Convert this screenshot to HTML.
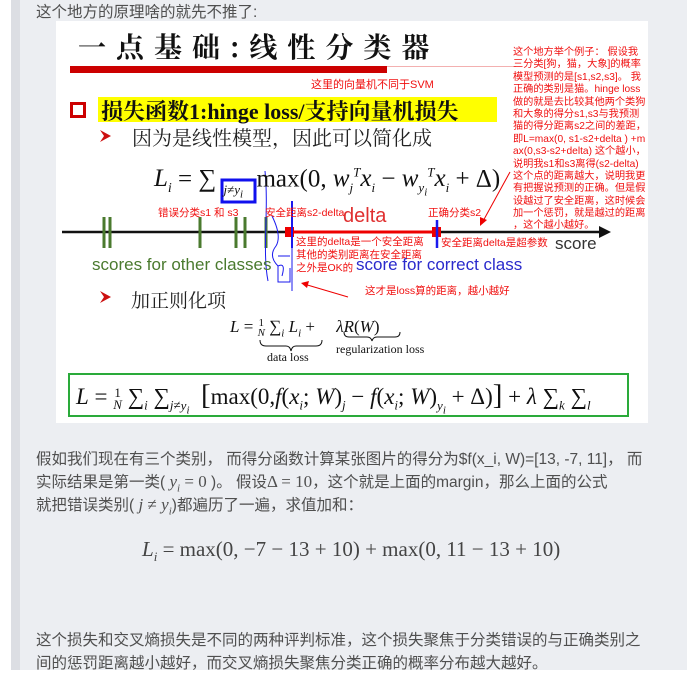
<!DOCTYPE html>
<html><head><meta charset="utf-8"><style>
*{margin:0;padding:0;box-sizing:border-box}
body{width:699px;height:670px;overflow:hidden;background:#fff;position:relative;font-family:"Liberation Sans","Noto Sans CJK SC",sans-serif}
.strip{position:absolute;left:11px;top:0;width:9px;height:670px;background:#dcdee3}
.panel{position:absolute;left:20px;top:0;width:667px;height:670px;background:#eceef2}
.a{position:absolute;white-space:nowrap}
.t{color:#4f4f4f;font-size:15.5px}
.img{position:absolute;left:56px;top:21px;width:592px;height:402px;background:#fff;overflow:hidden}
.r{color:#f01010;font-size:10.5px}
.ser{font-family:"Liberation Serif","Noto Serif CJK SC",serif}
.ann div{height:12.4px;line-height:12.4px}
</style></head><body>
<div class="strip"></div><div class="panel"></div>
<div class="a t" style="left:36px;top:0px">这个地方的原理啥的就先不推了:</div>

<div class="img">
<svg width="594" height="402" style="position:absolute;left:0;top:0">
<rect x="14" y="45" width="317" height="7" fill="#cc0000"/>
<line x1="331" y1="45.5" x2="460" y2="45.5" stroke="#f3b0b0" stroke-width="1"/>
<rect x="15.5" y="82.5" width="13" height="13" fill="none" stroke="#c00" stroke-width="3"/>
<rect x="42" y="76" width="399" height="25" fill="#ffff00"/>
<polygon points="44,109 55,115 44,121 48,115" fill="#cc1010"/>
<polygon points="44,270 55,276 44,282 48,276" fill="#cc1010"/>
<rect x="166" y="159" width="33" height="22" fill="none" stroke="#1010ee" stroke-width="3"/>
<line x1="6" y1="211" x2="550" y2="211" stroke="#111" stroke-width="2.5"/>
<polygon points="555,211 543,205 543,217" fill="#111"/>
<g stroke="#4a7a2e" stroke-width="3">
<line x1="48" y1="196" x2="48" y2="227"/><line x1="54" y1="196" x2="54" y2="227"/>
<line x1="144" y1="196" x2="144" y2="227"/><line x1="180" y1="196" x2="180" y2="227"/>
<line x1="189" y1="196" x2="189" y2="227"/><line x1="210" y1="196" x2="210" y2="227"/>
</g>
<line x1="234" y1="211" x2="381" y2="211" stroke="#e00" stroke-width="3"/>
<rect x="229" y="206" width="9" height="10" fill="#e00"/>
<rect x="376" y="206" width="9" height="10" fill="#e00"/>
<line x1="236" y1="180" x2="236" y2="227" stroke="#1a1aee" stroke-width="2"/>
<line x1="381" y1="199" x2="381" y2="227" stroke="#1a1aee" stroke-width="2.5"/>
<path d="M209 150 C213 190,206 230,212 260 M216 195 q10 20 4 30 q-8 10 2 20 q8 -4 4 10 M222 235 h12 M222 245 v16 h12 v-14 M236 190 v80" fill="none" stroke="#1a1aee" stroke-width="1"/>
<line x1="454" y1="151" x2="426" y2="202" stroke="#e00" stroke-width="1"/>
<polygon points="424,205 424,196 431,199" fill="#e00"/>
<line x1="292" y1="276" x2="248" y2="263" stroke="#e00" stroke-width="1"/>
<polygon points="245,262 253,260 251,267" fill="#e00"/>
<path d="M204 319 q0 6 6 6 h20 q4 0 5 5 q1 -5 5 -5 h20 q6 0 6 -6" fill="none" stroke="#111" stroke-width="1"/>
<path d="M288 311 q0 5 5 5 h18 q4 0 5 4 q1 -4 5 -4 h18 q5 0 5 -5" fill="none" stroke="#111" stroke-width="1"/>
<rect x="13" y="353" width="559" height="42" fill="none" stroke="#2aaa3a" stroke-width="2"/>
</svg>
<div class="a" style="left:22px;top:5px;font-size:28px;font-weight:bold;letter-spacing:10px;color:#111;font-family:'Noto Serif CJK SC',serif">一点基础:线性分类器</div>
<div class="a r" style="left:255px;top:55px;font-size:11px">这里的向量机不同于SVM</div>
<div class="a" style="left:45px;top:74px;font-size:22px;font-weight:bold;color:#111;font-family:'Liberation Serif','Noto Serif CJK SC',serif">损失函数1:hinge loss/支持向量机损失</div>
<div class="a" style="left:76px;top:101px;font-size:20px;color:#222;font-family:'Noto Serif CJK SC',serif">因为是线性模型，因此可以简化成</div>
<div class="a ser" style="left:98px;top:144px;font-size:25px;color:#111"><i>L<sub style="font-size:14px">i</sub></i> = ∑<span style="display:inline-block;width:34px;font-size:13px;vertical-align:-8px;text-align:center"><i>j</i>≠<i>y<sub>i</sub></i></span> max(0, <i>w<sub style="font-size:13px">j</sub><sup style="font-size:13px">T</sup>x<sub style="font-size:13px">i</sub></i> − <i>w<sub style="font-size:13px">y<sub>i</sub></sub><sup style="font-size:13px">T</sup>x<sub style="font-size:13px">i</sub></i> + Δ)</div>
<div class="a r ann" style="left:457px;top:26px;font-size:10.2px">
<div>这个地方举个例子： 假设我</div><div>三分类[狗，猫，大象]的概率</div><div>模型预测的是[s1,s2,s3]。 我</div><div>正确的类别是猫。hinge loss</div><div>做的就是去比较其他两个类狗</div><div>和大象的得分s1,s3与我预测</div><div>猫的得分距离s2之间的差距，</div><div>即L=max(0, s1-s2+delta ) +m</div><div>ax(0,s3-s2+delta) 这个越小，</div><div>说明我s1和s3离得(s2-delta)</div><div>这个点的距离越大，说明我更</div><div>有把握说预测的正确。但是假</div><div>设越过了安全距离，这时候会</div><div>加一个惩罚，就是越过的距离</div><div>，这个越小越好。</div></div>
<div class="a r" style="left:102px;top:184px">错误分类s1 和 s3</div>
<div class="a r" style="left:209px;top:184px">安全距离s2-delta</div>
<div class="a" style="left:287px;top:184px;font-size:20px;color:#e03030">delta</div>
<div class="a r" style="left:372px;top:184px">正确分类s2</div>
<div class="a r" style="left:240px;top:215px;line-height:13px">这里的delta是一个安全距离<br>其他的类别距离在安全距离<br>之外是OK的</div>
<div class="a r" style="left:385px;top:214px">安全距离delta是超参数</div>
<div class="a" style="left:499px;top:213px;font-size:17px;color:#333">score</div>
<div class="a" style="left:36px;top:234px;font-size:17px;color:#4a7a2e">scores for other classes</div>
<div class="a" style="left:300px;top:234px;font-size:17px;color:#2a2acc">score for correct class</div>
<div class="a r" style="left:309px;top:262px">这才是loss算的距离，越小越好</div>
<div class="a" style="left:75px;top:265px;font-size:19px;color:#222;font-family:'Noto Serif CJK SC',serif">加正则化项</div>
<div class="a ser" style="left:174px;top:296px;font-size:17px;color:#111"><i>L</i> = <span style="display:inline-block;font-size:11px;vertical-align:middle;text-align:center;line-height:10px">1<br><i>N</i></span> ∑<sub style="font-size:11px"><i>i</i></sub> <i>L<sub style="font-size:11px">i</sub></i> + &nbsp;&nbsp;&nbsp;&nbsp;<i>λR</i>(<i>W</i>)</div>
<div class="a ser" style="left:211px;top:329px;font-size:12px;color:#111">data loss</div>
<div class="a ser" style="left:280px;top:321px;font-size:12px;color:#111">regularization loss</div>
<div class="a ser" style="left:20px;top:358px;font-size:23px;color:#111"><i>L</i> = <span style="display:inline-block;font-size:13px;vertical-align:middle;text-align:center;line-height:12px">1<br><i>N</i></span> ∑<sub style="font-size:13px"><i>i</i></sub> ∑<sub style="font-size:13px"><i>j</i>≠<i>y<sub>i</sub></i></sub> &nbsp;<span style="font-size:29px">[</span>max(0,<i>f</i>(<i>x<sub style="font-size:13px">i</sub></i>; <i>W</i>)<sub style="font-size:13px"><i>j</i></sub> − <i>f</i>(<i>x<sub style="font-size:13px">i</sub></i>; <i>W</i>)<sub style="font-size:13px"><i>y<sub>i</sub></i></sub> + Δ)<span style="font-size:29px">]</span> + <i>λ</i> ∑<sub style="font-size:13px"><i>k</i></sub> ∑<sub style="font-size:13px"><i>l</i></sub></div>
</div>

<div class="a t" style="left:36px;top:447px">假如我们现在有三个类别， 而得分函数计算某张图片的得分为$f(x_i, W)=[13, -7, 11]， 而</div>
<div class="a t" style="left:36px;top:470px">实际结果是第一类( <i class="ser" style="font-size:17px;line-height:15px">y<sub style="font-size:11px;line-height:0">i</sub></i> <span class="ser" style="font-size:17px;line-height:15px">= 0</span> )。 假设<span class="ser" style="font-size:17px;line-height:15px">Δ = 10</span>，这个就是上面的margin，那么上面的公式</div>
<div class="a t" style="left:36px;top:493px">就把错误类别( <i class="ser" style="font-size:17px;line-height:15px">j</i> <span class="ser" style="font-size:17px;line-height:15px">≠</span> <i class="ser" style="font-size:17px;line-height:15px">y<sub style="font-size:11px;line-height:0">i</sub></i>)都遍历了一遍，求值加和：</div>
<div class="a ser" style="left:142px;top:537px;font-size:21px;color:#444"><i>L<sub style="font-size:13px">i</sub></i> = max(0, −7 − 13 + 10) + max(0, 11 − 13 + 10)</div>
<div class="a t" style="left:36px;top:628px">这个损失和交叉熵损失是不同的两种评判标准，这个损失聚焦于分类错误的与正确类别之</div>
<div class="a t" style="left:36px;top:651px">间的惩罚距离越小越好，而交叉熵损失聚焦分类正确的概率分布越大越好。</div>
</body></html>
